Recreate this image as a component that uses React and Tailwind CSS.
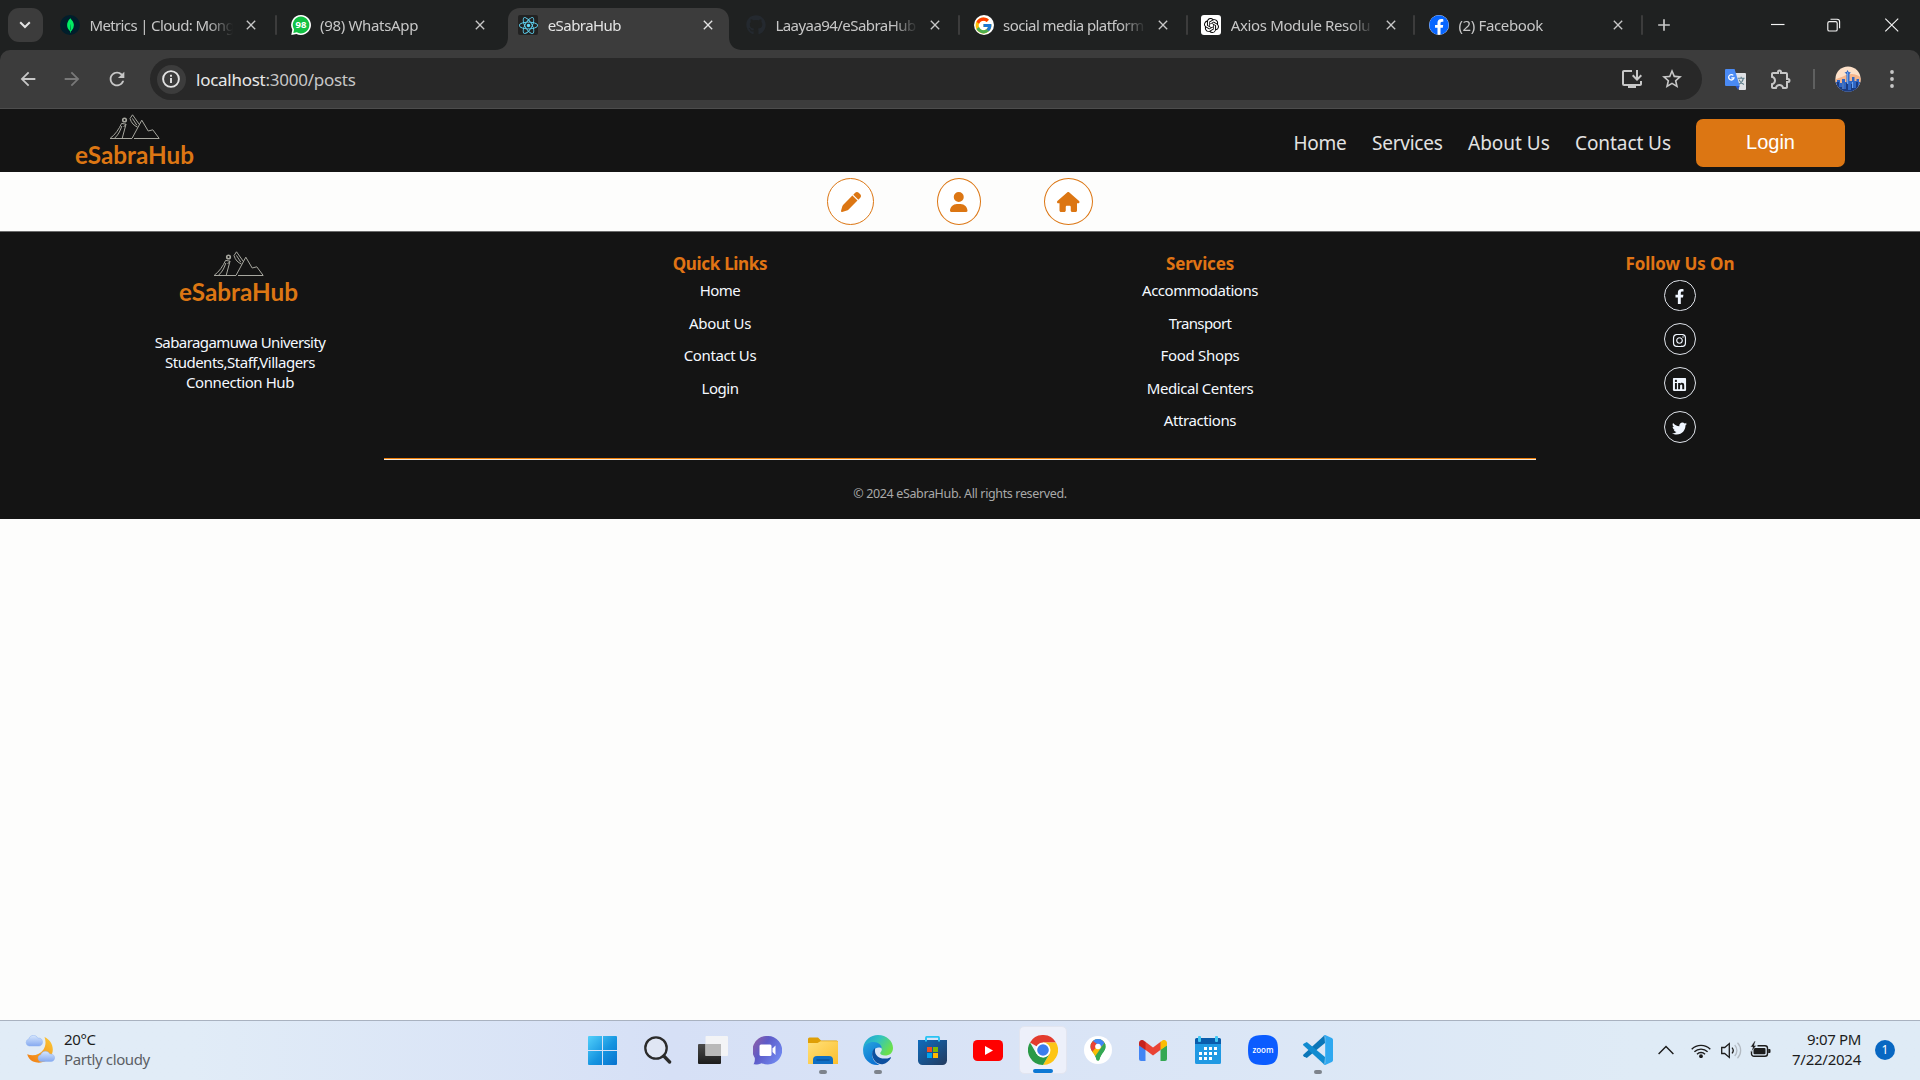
import React from "react";
import { FaReact, FaGithub, FaFacebook, FaFacebookF, FaInstagram, FaLinkedin, FaTwitter } from "react-icons/fa";
import { FaPen, FaUser, FaHouse } from "react-icons/fa6";
import { FcGoogle } from "react-icons/fc";
import { SiMongodb, SiOpenai } from "react-icons/si";
import { MdOutlineInstallDesktop, MdStarBorder, MdOutlineExtension, MdClose, MdAdd, MdRefresh, MdArrowBack, MdArrowForward } from "react-icons/md";

const NOTO = "font-['Noto_Sans',sans-serif]";

/* ---------- browser chrome ---------- */

function MongoIcon() {
  return (
    <span className="flex size-5 items-center justify-center rounded-full bg-[#001e2b]">
      <SiMongodb className="size-[15px] text-[#00ed64]" />
    </span>
  );
}

function WhatsAppIcon() {
  return (
    <svg viewBox="0 0 20 20" className="size-5">
      <path d="M10 0a10 10 0 1 1-4.6 18.9L.3 20l1-5.2A10 10 0 0 1 10 0Z" fill="#fff" />
      <path d="M10 1.6a8.4 8.4 0 1 1-4.2 15.7l-3.5.8.8-3.6A8.4 8.4 0 0 1 10 1.6Z" fill="#12c143" />
      <text x="10" y="13.4" textAnchor="middle" fontSize="9.5" fontWeight="700" fill="#fff" fontFamily="Noto Sans, sans-serif">98</text>
    </svg>
  );
}

function ReactIcon() {
  return (
    <span className="flex size-5 items-center justify-center rounded-[2px] bg-[#222]">
      <FaReact className="size-[19px] text-[#61dafb]" />
    </span>
  );
}

function GoogleIcon() {
  return (
    <span className="flex size-5 items-center justify-center rounded-full bg-white">
      <FcGoogle className="size-[19px]" />
    </span>
  );
}

function OpenAiIcon() {
  return (
    <span className="flex size-5 items-center justify-center rounded-[3px] bg-white">
      <SiOpenai className="size-[15px] text-black" />
    </span>
  );
}

function FacebookIcon() {
  return (
    <span className="flex size-5 items-center justify-center rounded-full bg-white">
      <FaFacebook className="size-5 text-[#0866ff]" />
    </span>
  );
}

const TABS = [
  { title: "Metrics | Cloud: Mong", icon: <MongoIcon />, track: "tracking-[-0.64px]", first: true, sep: true },
  { title: "(98) WhatsApp", icon: <WhatsAppIcon />, track: "tracking-[-0.33px]" },
  { title: "eSabraHub", icon: <ReactIcon />, track: "tracking-[-0.55px]", active: true },
  { title: "Laayaa94/eSabraHub", icon: <FaGithub className="size-5 text-[#24292f]" />, track: "tracking-[-0.55px]", sep: true },
  { title: "social media platform", icon: <GoogleIcon />, track: "tracking-[-0.58px]", sep: true },
  { title: "Axios Module Resolu", icon: <OpenAiIcon />, track: "tracking-[-0.36px]", sep: true },
  { title: "(2) Facebook", icon: <FacebookIcon />, track: "tracking-[-0.35px]", sep: true },
];

function Tab({ title, icon, track, active, sep, first }) {
  return (
    <div className={`relative flex h-[42px] shrink-0 ${first ? "w-[229.5px]" : "w-[227.7px]"}`}>
      {active && (
        <svg viewBox="0 0 246 42" className="absolute bottom-0 left-[-10px] h-[42px] w-[246px]" fill="#3c3c3c">
          <path d="M0 42C8 42 13 37 13 29V12C13 5 18 0 25 0H222C229 0 234 5 234 12V29C234 37 239 42 247 42Z" />
        </svg>
      )}
      <div className={`relative flex h-[34px] w-full items-center ${first ? "pl-[12.5px]" : "pl-[13.5px]"}`}>
        {icon}
        <span
          className={`ml-[9.5px] w-[146px] overflow-hidden text-[15px] leading-[22px] whitespace-nowrap [mask-image:linear-gradient(to_right,#000_118px,transparent_143px)] ${track} ${active ? "text-[#e3e3e3]" : "text-[#c7c7c7]"}`}
        >
          {title}
        </span>
        <MdClose className={`size-4 ${first ? "ml-[7px]" : "ml-[6px]"} ${active ? "text-[#e3e3e3]" : "text-[#c7c7c7]"}`} />
        {sep && <span className="ml-auto h-5 w-[2px] rounded bg-[#3c3c3c]" />}
      </div>
    </div>
  );
}

function WindowButtons() {
  return (
    <svg viewBox="0 0 128 14" className="mr-[21.5px] ml-auto h-[14px] w-[128px]" fill="none" stroke="#f4f4f4" strokeWidth="1.15">
      <path d="M0 6.5H13.5" />
      <rect x="56.8" y="3.6" width="9.4" height="9.4" rx="1.6" />
      <path d="M59.5 1.2H66a2.6 2.6 0 0 1 2.6 2.6v6.5" />
      <path d="M114.3.7 127.2 13.3M127.2.7 114.3 13.3" />
    </svg>
  );
}

function TabStrip() {
  return (
    <div className="flex h-[50px] shrink-0 bg-[#1f2121] pt-2">
      <div className="ml-[8px] flex h-[34px] w-[34.5px] items-center justify-center rounded-[11px] bg-[#3c3c3c]">
        <svg viewBox="0 0 12 8" className="h-[8px] w-[12px]" fill="none" stroke="#e3e3e3" strokeWidth="2">
          <path d="M1.2 1.2 6 6l4.8-4.8" />
        </svg>
      </div>
      <div className="ml-[5px] flex">
        {TABS.map((t) => (
          <Tab key={t.title} {...t} />
        ))}
      </div>
      <div className="flex h-[34px] flex-1 items-center">
        <MdAdd className="ml-[10.5px] size-[20px] text-[#c7c7c7]" />
        <WindowButtons />
      </div>
    </div>
  );
}

function TranslateIcon() {
  return (
    <svg viewBox="0 0 21 21" className="h-[21px] w-[21px]">
      <path d="M8 4h12a1 1 0 0 1 1 1v15a1 1 0 0 1-1 1h-6Z" fill="#dfe1e5" />
      <path d="M12.8 9.2h6.8M16.2 7.8v1.4M18.4 9.4c-.6 2.6-2.6 5-4.8 6.2M14 10.6c.8 2 2.6 4 5 5" stroke="#5f7f8c" strokeWidth="1.1" fill="none" />
      <path d="M10.5 17h4.2L13 21Z" fill="#2a56c6" />
      <path d="M1 0h8.6l5.1 17H1a1 1 0 0 1-1-1V1a1 1 0 0 1 1-1Z" fill="#4a8af4" />
      <path d="M8.3 6.4A2.7 2.7 0 1 0 9 8.9H6.3" stroke="#fff" strokeWidth="1.3" fill="none" />
    </svg>
  );
}

function Avatar() {
  return (
    <svg viewBox="0 0 26 26" className="size-[26px]">
      <defs>
        <clipPath id="avatar-clip"><circle cx="13" cy="13" r="12.6" /></clipPath>
      </defs>
      <g clipPath="url(#avatar-clip)">
        <rect width="26" height="26" fill="#fde0c8" />
        <path d="M0 14c4-3 6-2 9-4s12-4 17 2v10H0Z" fill="#f6b58b" />
        <path d="M0 16h2v-2h3v3h2v-4h3v3h1.500V8L9.500 6.500l2-.5L12.600 4l1 2 2.200.5L14.500 8v7H17v-4h2.500v4h2v-2H24v3h2v12H0Z" fill="#2f66c4" />
        <path d="M0 19h2v-3h2v5h3v-4h2v6h2v-6h2v7h3v-6h2v4h3v-6h2v5h3v6H0Z" fill="#1b3b80" />
        <path d="M12.600 6v12M8 17v6M17.500 16v6" stroke="#6fa5ee" strokeWidth="1.100" />
      </g>
    </svg>
  );
}

function Toolbar() {
  return (
    <div className="h-[59px] shrink-0 bg-[#1f2121]">
      <div className="flex h-full items-center rounded-t-[10px] border-b border-[#4d4d4d] bg-[#3c3c3c]">
        <MdArrowBack className="ml-[16.5px] size-[22px] text-[#c7c7c7]" />
        <MdArrowForward className="ml-[22.5px] size-[22px] text-[#787878]" />
        <MdRefresh className="ml-[23px] size-[22px] text-[#c7c7c7]" />
        <div className="ml-[21.5px] flex h-[42px] w-[1552px] items-center rounded-full bg-[#282828] pl-[7px]">
          <span className="flex size-[29px] items-center justify-center rounded-full bg-[#3c3c3c]">
            <svg viewBox="0 0 18 18" className="size-[18px]" fill="none" stroke="#e3e3e3" strokeWidth="1.9">
              <circle cx="9" cy="9" r="7.9" />
              <path d="M9 8v5M9 4.8v1.9" />
            </svg>
          </span>
          <span className="ml-[10.5px] pt-px text-[17px] tracking-[-0.26px] whitespace-nowrap text-[#c7c7c7]">
            <span className="text-[#e8e8e8]">localhost</span>:3000/posts
          </span>
          <MdOutlineInstallDesktop className="mr-[16px] ml-auto size-[24px] text-[#c7c7c7]" />
          <MdStarBorder className="mr-[17.500px] size-[24px] text-[#c7c7c7]" />
        </div>
        <div className="ml-[23px]"><TranslateIcon /></div>
        <MdOutlineExtension className="ml-[23.500px] size-[24px] text-[#c7c7c7]" />
        <span className="ml-[19.500px] h-5 w-[2px] bg-[#5f6060]" />
        <div className="ml-[20px]"><Avatar /></div>
        <svg viewBox="0 0 4 18" className="ml-[29.500px] h-[18px] w-[4px]" fill="#c7c7c7">
          <circle cx="2" cy="2" r="1.9" /><circle cx="2" cy="9" r="1.9" /><circle cx="2" cy="16" r="1.9" />
        </svg>
      </div>
    </div>
  );
}

/* ---------- page ---------- */

function Logo() {
  return (
    <svg viewBox="0 0 122 58" className="h-[58px] w-[122px]">
      <g fill="none" stroke="#a7a79f" strokeWidth="1" transform="translate(0 2)">
        <path d="M35 24.5H57M59 24.5H84.3" strokeWidth="1.2" />
        <path d="M35.3 24.2C40 21 44 15 46.6 9.4L51 10.2 47.3 24M39.8 24C44 20 45.5 16 46.8 12M48.6 13 51 10.2" />
        <circle cx="49.5" cy="6" r="1.8" strokeWidth="1.6" />
        <path d="M55 4.6 57.5.8 64.4 10.5M55 4.6C56.5 9.400 59 11.400 62.600 13.200M57.400 4.400l4.400 6.800" />
        <path d="M57 24.400 66.800 6.200 73.200 17 77.800 15.800 84 24.200" />
      </g>
      <text x="0" y="52" textLength="119" lengthAdjust="spacingAndGlyphs" fontSize="25.500" fontWeight="700" fill="#dc7613" fontFamily="Lato, Noto Sans, sans-serif">
        eSabraHub
      </text>
    </svg>
  );
}

function Nav() {
  return (
    <div className="flex h-[63px] shrink-0 items-center bg-[#141414] pr-[75px] pl-[74.5px] text-[19px] text-[#e2e2e2]">
      <Logo />
      <div className="ml-auto flex items-center gap-[25px] whitespace-nowrap">
        <span className="w-[53.500px] pt-[5px] tracking-[-0.25px]">Home</span>
        <span className="w-[71px] pt-[6px] tracking-[-0.25px]">Services</span>
        <span className="w-[82px] pt-[5px]">About Us</span>
        <span className="w-[96px] pt-[5px] tracking-[-0.07px]">Contact Us</span>
        <div className="mt-[4px] flex h-12 w-[149px] items-center justify-center rounded-[7px] bg-[#dc7613] pb-[1px] font-['Liberation_Sans',sans-serif] text-[20px] text-white">
          Login
        </div>
      </div>
    </div>
  );
}

function ActionBar() {
  return (
    <div className="flex h-[60px] shrink-0 items-center justify-center gap-[63px] border-b border-[#6b6b6b] bg-[#fdfdfc] text-[20px] text-[#dc7613]">
      <span className="flex h-[47px] w-[47px] items-center justify-center rounded-[50%] border border-[#dc7613] bg-white"><FaPen /></span>
      <span className="flex h-[47px] w-[44px] items-center justify-center rounded-[50%] border border-[#dc7613] bg-white"><FaUser className="h-5 w-[17.5px]" /></span>
      <span className="flex h-[47px] w-[49px] items-center justify-center rounded-[50%] border border-[#dc7613] bg-white"><FaHouse className="h-5 w-[22.5px]" /></span>
    </div>
  );
}

const LINKS = [
  ["Home", "tracking-[-0.6px]"],
  ["About Us", "tracking-[-0.33px]"],
  ["Contact Us", "tracking-[-0.38px]"],
  ["Login", "tracking-[-0.45px]"],
];
const SERVICES = [
  ["Accommodations", "tracking-[-0.48px]"],
  ["Transport", "tracking-[-0.65px]"],
  ["Food Shops", "tracking-[-0.32px]"],
  ["Medical Centers", "tracking-[-0.43px]"],
  ["Attractions", "tracking-[-0.4px]"],
];
const SOCIAL = [FaFacebookF, FaInstagram, FaLinkedin, FaTwitter];

function LinkColumn({ title, titleTrack, items }) {
  return (
    <div className="flex flex-col items-center pt-[21px]">
      <h3 className={`text-[17px] leading-[22px] font-bold text-[#e07414] ${titleTrack}`}>{title}</h3>
      <ul className="-mt-px text-center text-[15px] leading-[32.5px] text-[#f5f9ff]">
        {items.map(([label, track]) => (
          <li key={label} className={track}>{label}</li>
        ))}
      </ul>
    </div>
  );
}

function Footer() {
  return (
    <div className="flex h-[287px] shrink-0 flex-col items-center bg-[#141414]">
      <div className="grid h-[226px] w-full grid-cols-4">
        <div className="flex flex-col items-center pt-[16.500px]">
          <Logo />
          <div className="mt-[25.500px] text-center text-[15px] leading-[20px] text-[#f5f9ff]">
            <p className="tracking-[-0.59px]">Sabaragamuwa University</p>
            <p className="tracking-[-0.49px]">Students,Staff,Villagers</p>
            <p className="tracking-[-0.42px]">Connection Hub</p>
          </div>
        </div>
        <LinkColumn title="Quick Links" titleTrack="tracking-[-0.3px]" items={LINKS} />
        <LinkColumn title="Services" titleTrack="tracking-[-0.17px]" items={SERVICES} />
        <div className="flex flex-col items-center pt-[21px]">
          <h3 className="text-[17px] leading-[22px] font-bold tracking-[-0.05px] text-[#e07414]">Follow Us On</h3>
          <div className="mt-[4.500px] flex flex-col gap-[12px]">
            {SOCIAL.map((Icon, i) => (
              <span key={i} className="flex h-[31.8px] w-8 items-center justify-center rounded-full border border-[#dfe3ea] pt-[3px] pr-px text-[15px] text-[#f0f6ff]">
                <Icon />
              </span>
            ))}
          </div>
        </div>
      </div>
      <div className="h-[2px] w-[1152px] border-t border-[#ee7f0b] bg-[#f5e8d8]" />
      <p className="mt-[25px] text-[12.5px] leading-[18px] tracking-[-0.36px] text-[#a9a9a9]">© 2024 eSabraHub. All rights reserved.</p>
    </div>
  );
}

/* ---------- taskbar ---------- */

function WeatherIcon() {
  return (
    <svg viewBox="0 0 30 28" className="h-[28px] w-[30px]">
      <defs>
        <linearGradient id="moon" x1="1" y1="0" x2="0" y2="1"><stop offset="0" stopColor="#fbc935" /><stop offset="1" stopColor="#f07a13" /></linearGradient>
        <linearGradient id="cloud" x1="0" y1="0" x2="0" y2="1"><stop offset="0" stopColor="#d7e7fd" /><stop offset="1" stopColor="#86aaf0" /></linearGradient>
      </defs>
      <path d="M19.500 2C26 5 29.500 12 27 19 24 26.500 15 29.500 8 26.500 5 25 3 22.500 2.200 19.300 8 21.500 15 20 18.500 14.500 21 10.500 21 6 19.500 2Z" fill="url(#moon)" />
      <path d="M4 11a3.600 3.600 0 0 1-.2-7C5-.5 11-1 12.800 3.200 16 2.500 17.800 5 17.500 7.500 17.200 9.500 16 11 14 11Z" fill="url(#cloud)" stroke="#8fb2f0" strokeWidth=".5" />
      <path d="M16 26.500a3.400 3.400 0 0 1-.2-6.700C17 15.300 23 15 24.800 19 28 18.500 29.800 21 29.600 23.200 29.300 25.200 28 26.500 26 26.500Z" fill="url(#cloud)" stroke="#8fb2f0" strokeWidth=".5" />
    </svg>
  );
}

const StartIcon = () => (
  <svg viewBox="0 0 29 29" className="size-[29px]">
    <defs><linearGradient id="win" x1="0" y1="0" x2="1" y2="1"><stop offset="0" stopColor="#52d0fb" /><stop offset=".55" stopColor="#1594e0" /><stop offset="1" stopColor="#0672ce" /></linearGradient></defs>
    <path d="M1 0h13v14H0V1a1 1 0 0 1 1-1ZM15 0h13a1 1 0 0 1 1 1v13H15ZM0 15h14v14H1a1 1 0 0 1-1-1ZM15 15h14v13a1 1 0 0 1-1 1H15Z" fill="url(#win)" />
  </svg>
);
const SearchIcon = () => (
  <svg viewBox="0 0 28 28" className="size-[28px]" fill="none" stroke="#2b2b2b">
    <circle cx="12" cy="12" r="10.700" strokeWidth="2.300" fill="#e6eaf4" fillOpacity=".6" />
    <path d="m19.800 20 5.800 6" strokeWidth="3.300" strokeLinecap="round" />
  </svg>
);
const TaskViewIcon = () => (
  <svg viewBox="0 0 30 28" className="h-[28px] w-[30px]">
    <defs><linearGradient id="tv" x1="0" y1="0" x2="0" y2="1"><stop offset="0" stopColor="#4b4b4b" /><stop offset="1" stopColor="#1c1c1c" /></linearGradient></defs>
    <rect x="0" y="8" width="23" height="20" rx="1" fill="url(#tv)" />
    <rect x="7.500" y="0" width="22.500" height="20" rx="1" fill="#f5f5f5" fillOpacity=".92" />
    <rect x="7.500" y="8" width="15.500" height="12" fill="#b9b9b9" />
  </svg>
);
const ChatIcon = () => (
  <svg viewBox="0 0 29 29" className="size-[29px]">
    <defs><linearGradient id="chat" x1="0" y1="0" x2="1" y2="0.600"><stop offset="0" stopColor="#9a5f9f" /><stop offset=".45" stopColor="#5d5bc8" /><stop offset="1" stopColor="#6f86ee" /></linearGradient></defs>
    <path d="M14.500 0a14.300 14.300 0 1 1-5.800 27.200C6 28.500 3 28.600.5 28.300c1-1.800 1.500-3.600 1.300-6.300A14.300 14.300 0 0 1 14.500 0Z" fill="url(#chat)" />
    <rect x="6.500" y="8.500" width="12" height="11.500" rx="1.500" fill="#fff" />
    <path d="m19.500 12.500 3-3v9.500l-3-3Z" fill="#fff" />
  </svg>
);
const FolderIcon = () => (
  <svg viewBox="0 0 30 27" className="h-[27px] w-[30px]">
    <defs><linearGradient id="fold" x1="0" y1="0" x2="1" y2="1"><stop offset="0" stopColor="#ffe07a" /><stop offset="1" stopColor="#fcbf2d" /></linearGradient></defs>
    <path d="M0 2a1.500 1.500 0 0 1 1.500-1.500H10l3 3h15.500A1.500 1.500 0 0 1 30 5v5H0Z" fill="#df9f06" />
    <path d="M0 6h9.500l3-1.800H29a1 1 0 0 1 1 1V27H0Z" fill="url(#fold)" />
    <path d="M5 27v-4a4 4 0 0 1 4-4h12a4 4 0 0 1 4 4v4Z" fill="#0f6fc5" />
    <path d="M8.500 23h13" stroke="#084f97" strokeWidth="1.300" />
  </svg>
);
const EdgeIcon = () => (
  <svg viewBox="0 0 30 30" className="size-[30px]">
    <defs>
      <linearGradient id="e1" x1="0" y1="0" x2="1" y2=".5"><stop offset="0" stopColor="#1d9fd8" /><stop offset=".5" stopColor="#31c3c0" /><stop offset="1" stopColor="#6be04d" /></linearGradient>
      <linearGradient id="e2" x1="0" y1="0" x2=".6" y2="1"><stop offset="0" stopColor="#27a6df" /><stop offset="1" stopColor="#0a6fd2" /></linearGradient>
    </defs>
    <path d="M.3 12C1.500 5 7.500 0 15 0c8.500 0 15 6 15 13 0 5-3.500 7.500-8 7.500-3 0-4.800-1-4.800-2.200 0-1 1.600-1.500 1.600-4C18.800 11 15.500 8.500 11 8.500 5.500 8.500 1.500 12 .3 16Z" fill="url(#e1)" />
    <path d="M.2 14C1.500 9.500 6 7 10.500 7c5 0 8.300 3 8.300 6.500C17.500 11.800 11.800 11.500 9.800 17c-1.700 5 1 10.500 6.700 12.900C7 31-.8 23.500.2 14Z" fill="url(#e2)" />
    <path d="M12 13c-2 1.800-3.500 4.500-2.500 8.500 1.200 4.500 5 8 10 7.700 3.800-.7 6.500-3 8.300-6 .4-.8 0-1.200-.8-.8-1.500.8-3.400 1.200-5.500 1.200-6 0-9.600-4-9.500-7.600 0-1.300.2-2.200 0-3Z" fill="#0c4f9f" />
  </svg>
);
const StoreIcon = () => (
  <svg viewBox="0 0 29 29" className="size-[29px]">
    <defs><linearGradient id="st" x1="0" y1="0" x2="1" y2="1"><stop offset="0" stopColor="#0f6cbd" /><stop offset="1" stopColor="#233a5e" /></linearGradient></defs>
    <path d="M0 4h29v20.500a4.500 4.500 0 0 1-4.500 4.500h-20A4.500 4.500 0 0 1 0 24.500Z" fill="url(#st)" />
    <path d="M8 5.500V1.800A1 1 0 0 1 9 .9h11a1 1 0 0 1 1 .9v3.700" fill="none" stroke="#2ac4f4" strokeWidth="1.900" />
    <path d="M9 11h5v5H9Z" fill="#f25022" /><path d="M15 11h5v5h-5Z" fill="#7fba00" /><path d="M9 17h5v5H9Z" fill="#00a4ef" /><path d="M15 17h5v5h-5Z" fill="#ffb900" />
  </svg>
);
const YouTubeIcon = () => (
  <svg viewBox="0 0 30 21" className="h-[21px] w-[30px]">
    <rect width="30" height="21" rx="4.500" fill="#f00" /><path d="m12 6 8 4.500-8 4.500Z" fill="#fff" />
  </svg>
);
const ChromeIcon = () => (
  <svg viewBox="0 0 48 48" className="size-[30px]">
    <path d="M24 24 3.200 12A24 24 0 0 1 44.800 12H24Z" fill="#e33b2e" />
    <path d="M24 12h20.800A24 24 0 0 1 24 48l10.400-18Z" fill="#fdc515" />
    <path d="M3.200 12 13.600 30 24 36l4-1 6.400-5L24 48A24 24 0 0 1 3.200 12Z" fill="#2a9a47" />
    <circle cx="24" cy="24" r="12" fill="#fff" /><circle cx="24" cy="24" r="9.300" fill="#3b7ded" />
  </svg>
);
const MapsIcon = () => (
  <svg viewBox="0 0 28 28" className="size-[28px]">
    <defs><clipPath id="pin"><path d="M14 3a7.500 7.500 0 0 1 7.500 7.500c0 5-4.500 6.500-6 13-.3 1.600-2.700 1.600-3 0-1.500-6.500-6-8-6-13A7.500 7.500 0 0 1 14 3Z" /></clipPath></defs>
    <circle cx="14" cy="14" r="14" fill="#fff" />
    <g clipPath="url(#pin)">
      <path d="M0 0h28v28H0Z" fill="#34a853" />
      <path d="M4 20 20 2l4 4L9 23Z" fill="#fbbc04" />
      <path d="M4 4h12l-1 4-7 8-4-2Z" fill="#ea4335" />
      <path d="M9 2h14v3l-6 6-8-6Z" fill="#4285f4" />
      <path d="M21 6 24 12 12 28 10 22Z" fill="#34a853" />
    </g>
    <circle cx="14" cy="10.500" r="2.800" fill="#fff" />
  </svg>
);
const GmailIcon = () => (
  <svg viewBox="0 0 28 21" className="h-[21px] w-[28px]">
    <path d="M0 5 6.500 9.500V21H2a2 2 0 0 1-2-2Z" fill="#4285f4" />
    <path d="M21.500 9.500 28 5v14a2 2 0 0 1-2 2h-4.500Z" fill="#34a853" />
    <path d="M6 1.500 14 7.500l8-6v8L14 15.500 6 9.500Z" fill="#ea4335" />
    <path d="M0 3C0 .3 3.200-.9 5 .7l1.500 1.200v8L0 5.500Z" fill="#c5221f" />
    <path d="M28 3c0-2.700-3.200-3.900-5-2.300l-1.500 1.200v8L28 5.500Z" fill="#fbbc04" />
  </svg>
);
const CalendarIcon = () => (
  <svg viewBox="0 0 26 28" className="h-[28px] w-[26px]">
    <path d="M0 7h26v19.500a1.500 1.500 0 0 1-1.500 1.500h-23A1.500 1.500 0 0 1 0 26.500Z" fill="#2099e3" />
    <path d="M1.500 2h23A1.500 1.500 0 0 1 26 3.500V8H0V3.500A1.500 1.500 0 0 1 1.500 2Z" fill="#0a5cab" />
    <rect x="3" width="3" height="6" rx="1" fill="#40c8f4" /><rect x="20" width="3" height="6" rx="1" fill="#40c8f4" />
    <path d="M9 11h3v3H9ZM14 11h3v3h-3ZM19 11h3v3h-3ZM4 16h3v3H4ZM9 16h3v3H9ZM14 16h3v3h-3ZM19 16h3v3h-3ZM4 21h3v3H4ZM9 21h3v3H9ZM14 21h3v3h-3Z" fill="#fff" />
  </svg>
);
const ZoomIcon = () => (
  <svg viewBox="0 0 30 30" className="size-[30px]">
    <path d="M15 0c11.500 0 15 3.500 15 15s-3.500 15-15 15S0 26.500 0 15 3.500 0 15 0Z" fill="#0b5cff" />
    <text x="15" y="17.500" textAnchor="middle" textLength="21" lengthAdjust="spacingAndGlyphs" fontSize="8.500" fontWeight="600" fill="#fff" fontFamily="Open Sans, sans-serif">zoom</text>
  </svg>
);
const CodeIcon = () => (
  <svg viewBox="0 0 30 30" className="size-[30px]">
    <path d="M22 8 3.800 23 .6 21.200a1.200 1.200 0 0 1-.1-1.800L21.500.3Z" fill="#0b76b8" />
    <path d="M22 22 3.800 7 .6 8.800a1.200 1.200 0 0 0-.1 1.800L21.500 29.700Z" fill="#108bd0" />
    <path d="M22.200 0 28.800 3a2 2 0 0 1 1.200 1.900v20.200a2 2 0 0 1-1.200 1.900l-6.600 3-1.700-.8 1.700-1V1.800l-1.700-1Z" fill="#2fa8f0" />
  </svg>
);

const APPS = [
  { Icon: StartIcon }, { Icon: SearchIcon }, { Icon: TaskViewIcon }, { Icon: ChatIcon },
  { Icon: FolderIcon, running: true }, { Icon: EdgeIcon, running: true }, { Icon: StoreIcon }, { Icon: YouTubeIcon },
  { Icon: ChromeIcon, current: true }, { Icon: MapsIcon }, { Icon: GmailIcon }, { Icon: CalendarIcon },
  { Icon: ZoomIcon }, { Icon: CodeIcon, running: true },
];

function Taskbar() {
  return (
    <div className="flex h-[60px] shrink-0 items-center border-t border-[#a9b2c0] bg-linear-to-r from-[#e1ecf7] from-10% via-[#d6e0f6] via-35% to-[#dfebf6] to-85% pb-px text-[15px] text-[#1c1c1c]">
      <div className="flex w-[575px] items-center pb-[2px] pl-[25px]">
        <WeatherIcon />
        <div className="ml-[9px] pb-px leading-[20px]">
          <p className="tracking-[-0.39px]">20°C</p>
          <p className="tracking-[-0.38px] text-[#5c6065]">Partly cloudy</p>
        </div>
      </div>
      {APPS.map(({ Icon, running, current }, i) => (
        <div key={i} className="flex w-[55px] justify-center">
          <div className={`relative flex size-12 items-center justify-center rounded-[5px] ${current ? "border border-[#e2e5f0] bg-[#edf0fa]" : ""}`}>
            <Icon />
            {running && <span className="absolute bottom-0 left-1/2 h-1 w-2 -translate-x-1/2 rounded-full bg-[#7d838c]" />}
            {current && <span className="absolute bottom-0 left-1/2 h-1 w-5 -translate-x-1/2 rounded-full bg-[#0d78d4]" />}
          </div>
        </div>
      ))}
      <div className="ml-auto flex items-center pr-[25px]">
        <svg viewBox="0 0 16 10" className="h-[10px] w-[16px]" fill="none" stroke="#1c1c1c" strokeWidth="1.400"><path d="m.6 9 7.400-7.600L15.400 9" /></svg>
        <svg viewBox="0 0 20 15" className="ml-[17px] h-[15px] w-[20px]" fill="none" stroke="#1c1c1c" strokeWidth="1.400">
          <path d="M.7 6.200a13.200 13.200 0 0 1 18.600 0M3.400 8.800a9.400 9.400 0 0 1 13.200 0M6 11.200a5.600 5.600 0 0 1 8 0" /><circle cx="10" cy="13.200" r="1.200" fill="#1c1c1c" />
        </svg>
        <svg viewBox="0 0 21 17" className="ml-[10px] h-[17px] w-[21px]" fill="none" stroke="#1c1c1c" strokeWidth="1.300">
          <path d="M.7 5.500h3L8.300 1.600v13.800L3.700 11.500h-3Z" /><path d="M11 5.600a4.400 4.400 0 0 1 0 5.800" /><path d="M13.700 3a8 8 0 0 1 0 11M16.500.8a11 11 0 0 1 0 15.400" stroke="#b3bac2" />
        </svg>
        <svg viewBox="0 0 21 18" className="ml-[8px] h-[18px] w-[21px]">
          <path d="M7.500 4.700H15a2.500 2.500 0 0 1 2.500 2.500v5.600A2.500 2.500 0 0 1 15 15.300H4a2.500 2.500 0 0 1-2.500-2.500V10" fill="none" stroke="#1c1c1c" strokeWidth="1.400" />
          <rect x="3.500" y="7" width="12" height="6.300" rx="1" fill="#1c1c1c" /><path d="M18.200 8h1.300a1 1 0 0 1 1 1v2a1 1 0 0 1-1 1h-1.300Z" fill="#1c1c1c" />
          <path d="M4.500 0 .5 6h2.200L1.500 10.500 6.500 4.600H4.200L5.500 0Z" fill="#1c1c1c" stroke="#dfebf6" strokeWidth=".5" />
        </svg>
        <div className="ml-[20px] w-[70px] pb-[3px] text-right leading-[20px] whitespace-nowrap">
          <p className="tracking-[-0.33px]">9:07 PM</p>
          <p className="tracking-[-0.25px]">7/22/2024</p>
        </div>
        <span className="ml-[14px] flex size-5 items-center justify-center rounded-full bg-[#0867c2] text-[12px] text-white">1</span>
      </div>
    </div>
  );
}

export default function App() {
  return (
    <div className={`flex h-[1080px] w-[1920px] flex-col overflow-hidden bg-[#fdfdfc] ${NOTO}`}>
      <TabStrip />
      <Toolbar />
      <Nav />
      <ActionBar />
      <Footer />
      <div className="flex-1" />
      <Taskbar />
    </div>
  );
}
